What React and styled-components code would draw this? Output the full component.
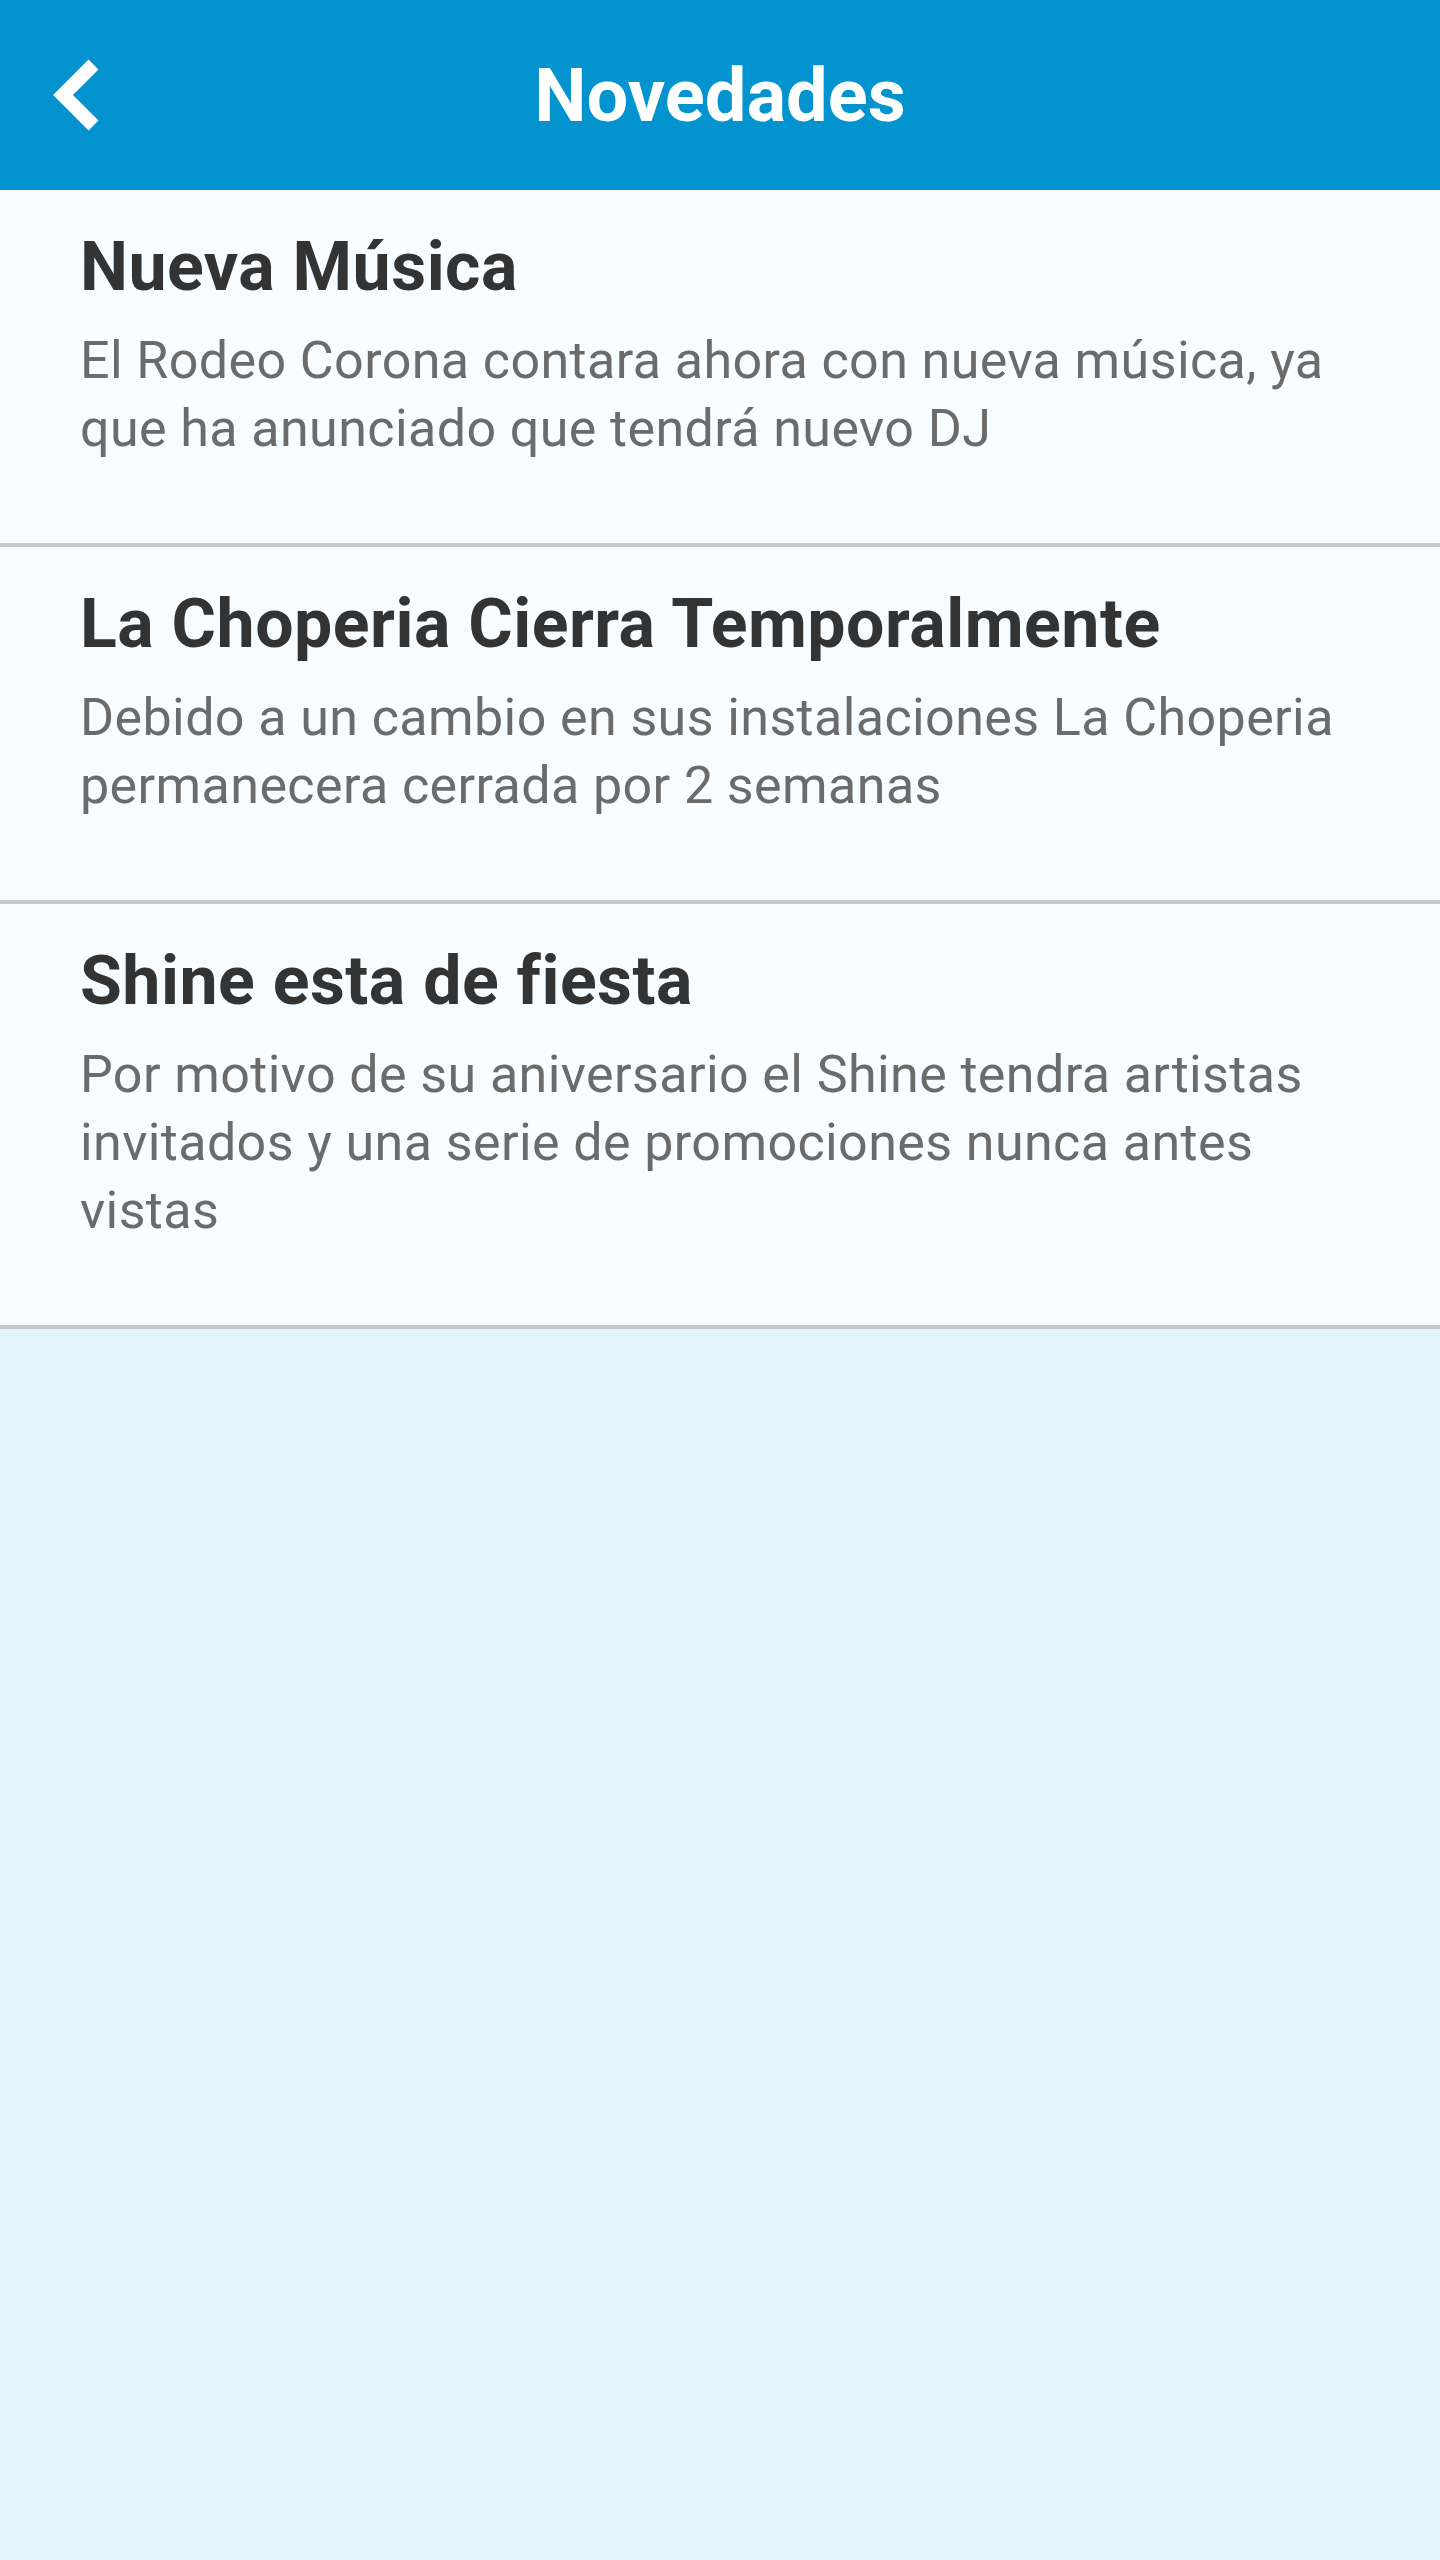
import React from 'react'
import styled, { createGlobalStyle } from 'styled-components'

const GlobalStyle = createGlobalStyle`
    html, body {
        margin: 0;
        padding: 0;
        background-color: #e3f5fc;
        font-family: Roboto, "Noto Sans", sans-serif;
    }
    #root {
        min-height: 2560px;
        background-color: #e3f5fc;
    }
`

const Header = styled.header`
    display: grid;
    grid-template-columns: 1fr auto 1fr;
    align-items: center;
    height: 190px;
    background-color: #0393cf;
`

const BackButton = styled.button`
    justify-self: start;
    display: flex;
    align-items: center;
    padding: 0 0 0 53px;
    border: none;
    background: none;
    cursor: pointer;
`

const Title = styled.h1`
    margin: 0;
    color: #ffffff;
    font-size: 74px;
    font-weight: 700;
    line-height: normal;
    text-align: center;
`

const List = styled.ul`
    list-style: none;
    margin: 0;
    padding: 0;
`

const Item = styled.li`
    padding: 37px 80px 80px;
    background-color: #f6fcff;
    border-bottom: 4px solid #c8c9cb;
`

const ItemTitle = styled.h2`
    margin: 0 0 20px;
    color: #333333;
    font-size: 68px;
    font-weight: 700;
    line-height: 80px;
    letter-spacing: 0.5px;
`

const ItemText = styled.p`
    margin: 0;
    color: #6b6b6b;
    font-size: 52px;
    font-weight: 400;
    line-height: 68px;
    letter-spacing: 0.4px;
`

const news = [
    {
        title: 'Nueva Música',
        text: 'El Rodeo Corona contara ahora con nueva música, ya que ha anunciado que tendrá nuevo DJ'
    },
    {
        title: 'La Choperia Cierra Temporalmente',
        text: 'Debido a un cambio en sus instalaciones La Choperia permanecera cerrada por 2 semanas'
    },
    {
        title: 'Shine esta de fiesta',
        text: 'Por motivo de su aniversario el Shine tendra artistas invitados y una serie de promociones nunca antes vistas'
    }
]

const App = () => {
    return (
        <>
            <GlobalStyle />
            <Header>
                <BackButton aria-label="Volver">
                    <svg width="46" height="72" viewBox="0 0 46 72">
                        <polyline
                            points="40.5,5.5 10,36 40.5,66.5"
                            fill="none"
                            stroke="#ffffff"
                            strokeWidth="14"
                            strokeLinecap="butt"
                            strokeLinejoin="miter"
                        />
                    </svg>
                </BackButton>
                <Title>Novedades</Title>
                <span />
            </Header>

            <List>
                {news.map(item => (
                    <Item key={item.title}>
                        <ItemTitle>{item.title}</ItemTitle>
                        <ItemText>{item.text}</ItemText>
                    </Item>
                ))}
            </List>
        </>
    )
}

export default App
